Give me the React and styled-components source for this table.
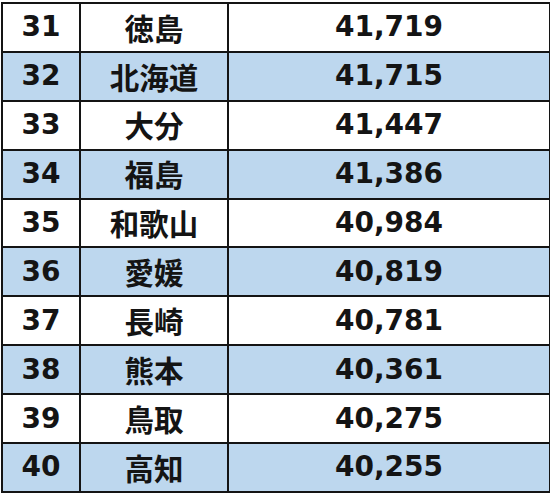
import React from 'react';
import styled, { createGlobalStyle } from 'styled-components';

const GlobalStyle = createGlobalStyle`
  html, body {
    margin: 0;
    padding: 0;
    background: #ffffff;
  }
`;

const rows = [
  { rank: 31, name: '徳島', value: '41,719' },
  { rank: 32, name: '北海道', value: '41,715' },
  { rank: 33, name: '大分', value: '41,447' },
  { rank: 34, name: '福島', value: '41,386' },
  { rank: 35, name: '和歌山', value: '40,984' },
  { rank: 36, name: '愛媛', value: '40,819' },
  { rank: 37, name: '長崎', value: '40,781' },
  { rank: 38, name: '熊本', value: '40,361' },
  { rank: 39, name: '鳥取', value: '40,275' },
  { rank: 40, name: '高知', value: '40,255' },
];

const Wrapper = styled.div`
  padding: 2px 0 0 1px;
`;

const Table = styled.table`
  border-collapse: collapse;
  table-layout: fixed;
  width: 548px;
  font-weight: bold;
  color: #141414;
`;

const Row = styled.tr`
  height: 48.9px;
  background: ${(p) => (p.$shaded ? '#bdd7ee' : '#ffffff')};
`;

const Cell = styled.td`
  border: 2px solid #141414;
  padding: 0;
  text-align: center;
  vertical-align: middle;
  font-size: ${(p) => (p.$jp ? '29.5px' : '28px')};
  line-height: 1;
  font-weight: bold;
  font-family: ${(p) =>
    p.$jp ? '"Noto Sans CJK JP", sans-serif' : '"DejaVu Sans", sans-serif'};
`;

export default function App() {
  return (
    <Wrapper>
      <GlobalStyle />
      <Table>
        <colgroup>
          <col style={{ width: 78 }} />
          <col style={{ width: 148 }} />
          <col style={{ width: 322 }} />
        </colgroup>
        <tbody>
          {rows.map((row, i) => (
            <Row key={row.rank} $shaded={i % 2 === 1}>
              <Cell>{row.rank}</Cell>
              <Cell $jp>{row.name}</Cell>
              <Cell>{row.value}</Cell>
            </Row>
          ))}
        </tbody>
      </Table>
    </Wrapper>
  );
}
